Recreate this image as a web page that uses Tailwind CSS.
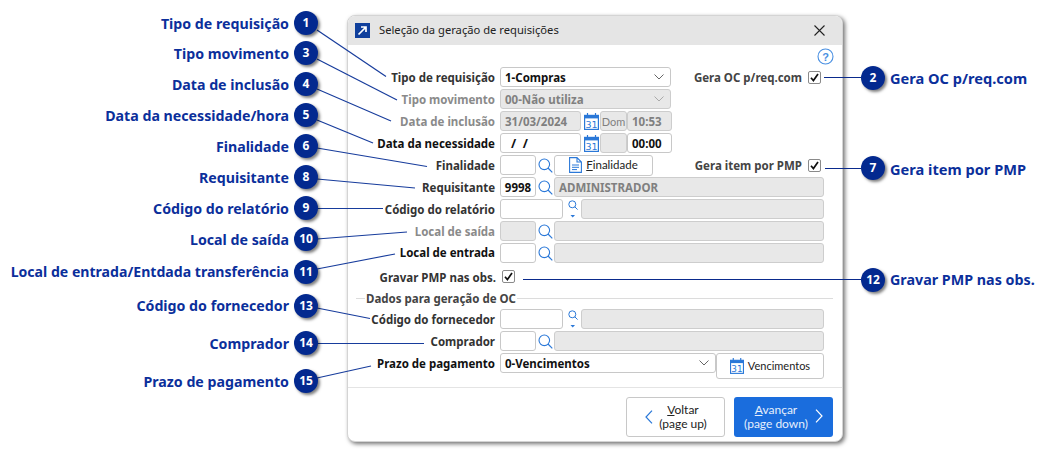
<!DOCTYPE html>
<html lang="pt">
<head>
<meta charset="utf-8">
<script src="https://cdn.jsdelivr.net/npm/@tailwindcss/browser@4"></script>
</head>
<body class="bg-white overflow-hidden">
<div class="relative w-[1052px] h-[451px] bg-white font-['Noto_Sans',sans-serif] pt-[15px] pl-[347px]">

  <!-- Dialog -->
  <div class="w-[496px] h-[427px] bg-white rounded-[8px] border border-[#d4d4d4] shadow-[2px_2px_4px_rgba(0,0,0,0.55)] flex flex-col overflow-hidden">
    <div class="h-[29px] shrink-0 bg-[#e5e5e5] flex items-center pl-[7px] pr-[17px]">
      <svg class="w-[15px] h-[15px] shrink-0" viewBox="0 0 15 15"><rect width="15" height="15" fill="#0f3f9c"/><path d="M3.5 11.5 L10.5 4.5 M6 4 H11 V9" stroke="#fff" stroke-width="1.7" fill="none"/></svg>
      <span class="ml-[9px] text-[11.2px] text-[#222]">Seleção da geração de requisições</span>
      <svg class="ml-auto w-[11px] h-[11px]" viewBox="0 0 11 11"><path d="M.5 .5 L10.5 10.5 M10.5 .5 L.5 10.5" stroke="#222" stroke-width="1.1"/></svg>
    </div>

    <div class="relative flex-1 pt-[22px] flex flex-col gap-[2px] text-[11.5px] font-bold">
      <svg class="absolute left-[469px] top-[3px] w-[17px] h-[17px]" viewBox="0 0 17 17"><circle cx="8.5" cy="8.5" r="7.5" fill="none" stroke="#4a90e2" stroke-width="1.1"/><text x="8.5" y="12.5" text-anchor="middle" font-size="11" font-weight="700" fill="#4a90e2" font-family="Liberation Sans">?</text></svg>

      <!-- Tipo de requisição -->
      <div class="flex items-center h-[20px]">
        <div class="w-[147px] pt-[2px] text-right text-[#333]">Tipo de requisição</div>
        <div class="ml-[5px] w-[171px] h-[20px] bg-white border border-[#c8c8c8] rounded-[3px] flex items-center pl-[4px] pr-[6px] text-[#111]"><span class="pt-[2px]">1-Compras</span>
          <svg class="ml-auto w-[10px] h-[6px]" viewBox="0 0 10 6"><path d="M.5 .5 L5 5 L9.5 .5" fill="none" stroke="#666" stroke-width="1"/></svg></div>
        <div class="ml-auto flex items-center">
          <span class="pt-[2px] text-[#444]">Gera OC p/req.com</span>
          <div class="ml-[6px] w-[13px] h-[13px] border border-[#8a8a8a] rounded-[2px] mr-[21px] flex items-center justify-center"><svg class="w-[9px] h-[9px]" viewBox="0 0 9 9"><path d="M1 4.8 L3.4 7.6 L8 1" fill="none" stroke="#111" stroke-width="1.7"/></svg></div>
        </div>
      </div>

      <!-- Tipo movimento -->
      <div class="flex items-center h-[20px]">
        <div class="w-[147px] pt-[2px] text-right text-[#8a8a8a]">Tipo movimento</div>
        <div class="ml-[5px] w-[171px] h-[20px] bg-[#e8e8e8] border border-[#cdcdcd] rounded-[3px] flex items-center pl-[4px] pr-[6px] text-[#808080]"><span class="pt-[2px]">00-Não utiliza</span>
          <svg class="ml-auto w-[10px] h-[6px]" viewBox="0 0 10 6"><path d="M.5 .5 L5 5 L9.5 .5" fill="none" stroke="#aaa" stroke-width="1"/></svg></div>
      </div>

      <!-- Data de inclusão -->
      <div class="flex items-center h-[20px]">
        <div class="w-[147px] pt-[2px] text-right text-[#8a8a8a]">Data de inclusão</div>
        <div class="ml-[5px] w-[81px] h-[20px] bg-[#e8e8e8] border border-[#cdcdcd] rounded-[3px] flex items-center pl-[4px] pt-[2px] text-[#808080]">31/03/2024</div>
        <svg class="ml-[3px] w-[15px] h-[17px] shrink-0" viewBox="0 0 15 17"><path d="M3.5 0v3M11.5 0v3" stroke="#2a78d8" stroke-width="1.2"/><rect x=".6" y="2.4" width="13.8" height="14" fill="none" stroke="#2a78d8" stroke-width="1.2"/><rect x=".6" y="2.4" width="13.8" height="3" fill="#2a78d8"/><text x="7.5" y="15" text-anchor="middle" font-size="9.5" font-weight="400" fill="#2a78d8" font-family="DejaVu Sans">31</text></svg>
        <div class="ml-[1px] w-[27px] h-[20px] bg-[#e8e8e8] border border-[#cdcdcd] rounded-[3px] flex items-center justify-center pt-[2px] text-[#808080] font-normal font-['Lato',sans-serif] text-[11px]">Dom</div>
        <div class="w-[45px] h-[20px] bg-[#e8e8e8] border border-[#cdcdcd] rounded-[3px] flex items-center pl-[4px] pt-[2px] text-[#808080]">10:53</div>
      </div>

      <!-- Data da necessidade -->
      <div class="flex items-center h-[20px]">
        <div class="w-[147px] pt-[2px] text-right text-[#111]">Data da necessidade</div>
        <div class="ml-[5px] w-[81px] h-[20px] bg-white border border-[#c8c8c8] rounded-[3px] flex items-center pl-[10px] pt-[2px] text-[#111] text-[12.5px] whitespace-pre">/  /</div>
        <svg class="ml-[3px] w-[15px] h-[17px] shrink-0" viewBox="0 0 15 17"><path d="M3.5 0v3M11.5 0v3" stroke="#2a78d8" stroke-width="1.2"/><rect x=".6" y="2.4" width="13.8" height="14" fill="none" stroke="#2a78d8" stroke-width="1.2"/><rect x=".6" y="2.4" width="13.8" height="3" fill="#2a78d8"/><text x="7.5" y="15" text-anchor="middle" font-size="9.5" font-weight="400" fill="#2a78d8" font-family="DejaVu Sans">31</text></svg>
        <div class="ml-[1px] w-[27px] h-[20px] bg-[#e8e8e8] border border-[#cdcdcd] rounded-[3px]"></div>
        <div class="w-[45px] h-[20px] bg-white border border-[#c8c8c8] rounded-[3px] flex items-center pl-[4px] pt-[2px] text-[#111]">00:00</div>
      </div>

      <!-- Finalidade -->
      <div class="flex items-center h-[20px]">
        <div class="w-[147px] pt-[2px] text-right text-[#333]">Finalidade</div>
        <div class="ml-[5px] w-[36px] h-[20px] bg-white border border-[#c8c8c8] rounded-[3px]"></div>
        <svg class="ml-[2px] w-[15px] h-[15px] shrink-0" viewBox="0 0 15 15"><circle cx="6.3" cy="6.3" r="5.3" fill="none" stroke="#2a78d8" stroke-width="1.1"/><path d="M10 10 L14.3 14.3" stroke="#2a78d8" stroke-width="1.2"/></svg>
        <div class="ml-[1px] w-[99px] h-[21px] bg-white border border-[#c8c8c8] rounded-[3px] flex items-center justify-center gap-[4px] font-normal text-[#222] font-['Lato',sans-serif] text-[11.5px]">
          <svg class="w-[13px] h-[16px]" viewBox="0 0 13 16"><path d="M.6.6H8L12.4 5V15.4H.6ZM8 .6V5H12.4" fill="none" stroke="#2a78d8" stroke-width="1.1"/><path d="M3 8H10M3 10.3H10M3 12.6H8" stroke="#2a78d8" stroke-width="1"/></svg>
          <span><span class="underline">F</span>inalidade</span></div>
        <div class="ml-auto flex items-center">
          <span class="pt-[2px] text-[#444]">Gera item por PMP</span>
          <div class="ml-[6px] w-[13px] h-[13px] border border-[#8a8a8a] rounded-[2px] mr-[21px] flex items-center justify-center"><svg class="w-[9px] h-[9px]" viewBox="0 0 9 9"><path d="M1 4.8 L3.4 7.6 L8 1" fill="none" stroke="#111" stroke-width="1.7"/></svg></div>
        </div>
      </div>

      <!-- Requisitante -->
      <div class="flex items-center h-[20px]">
        <div class="w-[147px] pt-[2px] text-right text-[#333]">Requisitante</div>
        <div class="ml-[5px] w-[36px] h-[20px] bg-white border border-[#c8c8c8] rounded-[3px] flex items-center justify-center pt-[2px] text-[#111]">9998</div>
        <svg class="ml-[2px] w-[15px] h-[15px] shrink-0" viewBox="0 0 15 15"><circle cx="6.3" cy="6.3" r="5.3" fill="none" stroke="#2a78d8" stroke-width="1.1"/><path d="M10 10 L14.3 14.3" stroke="#2a78d8" stroke-width="1.2"/></svg>
        <div class="ml-[1px] w-[270px] h-[20px] bg-[#e8e8e8] border border-[#cdcdcd] rounded-[3px] flex items-center pl-[4px] pt-[2px] text-[#808080]">ADMINISTRADOR</div>
      </div>

      <!-- Código do relatório -->
      <div class="flex items-center h-[20px]">
        <div class="w-[147px] pt-[2px] text-right text-[#333]">Código do relatório</div>
        <div class="ml-[5px] w-[63px] h-[20px] bg-white border border-[#c8c8c8] rounded-[3px]"></div>
        <svg class="ml-[5px] w-[10px] h-[18px] shrink-0" viewBox="0 0 10 18"><circle cx="4.3" cy="4.3" r="3.5" fill="none" stroke="#2a78d8" stroke-width="1"/><path d="M6.8 6.8 L9.6 9.6" stroke="#2a78d8" stroke-width="1"/><path d="M2.5 15 H7 L4.75 17.4Z" fill="#2a78d8"/></svg>
        <div class="ml-[3px] w-[243px] h-[20px] bg-[#e8e8e8] border border-[#cdcdcd] rounded-[3px]"></div>
      </div>

      <!-- Local de saída -->
      <div class="flex items-center h-[20px]">
        <div class="w-[147px] pt-[2px] text-right text-[#8a8a8a]">Local de saída</div>
        <div class="ml-[5px] w-[36px] h-[20px] bg-[#e8e8e8] border border-[#cdcdcd] rounded-[3px]"></div>
        <svg class="ml-[2px] w-[15px] h-[15px] shrink-0" viewBox="0 0 15 15"><circle cx="6.3" cy="6.3" r="5.3" fill="none" stroke="#2a78d8" stroke-width="1.1"/><path d="M10 10 L14.3 14.3" stroke="#2a78d8" stroke-width="1.2"/></svg>
        <div class="ml-[1px] w-[270px] h-[20px] bg-[#e8e8e8] border border-[#cdcdcd] rounded-[3px]"></div>
      </div>

      <!-- Local de entrada -->
      <div class="flex items-center h-[20px]">
        <div class="w-[147px] text-right text-[#111]">Local de entrada</div>
        <div class="ml-[5px] w-[36px] h-[20px] bg-white border border-[#c8c8c8] rounded-[3px]"></div>
        <svg class="ml-[2px] w-[15px] h-[15px] shrink-0" viewBox="0 0 15 15"><circle cx="6.3" cy="6.3" r="5.3" fill="none" stroke="#2a78d8" stroke-width="1.1"/><path d="M10 10 L14.3 14.3" stroke="#2a78d8" stroke-width="1.2"/></svg>
        <div class="ml-[1px] w-[270px] h-[20px] bg-[#e8e8e8] border border-[#cdcdcd] rounded-[3px]"></div>
      </div>

      <!-- Gravar PMP -->
      <div class="flex items-center h-[13px] mt-[5px]">
        <div class="w-[148px] pt-[2px] text-right text-[#333]">Gravar PMP nas obs.</div>
        <div class="ml-[6px] w-[13px] h-[13px] border border-[#8a8a8a] rounded-[2px] flex items-center justify-center"><svg class="w-[9px] h-[9px]" viewBox="0 0 9 9"><path d="M1 4.8 L3.4 7.6 L8 1" fill="none" stroke="#111" stroke-width="1.7"/></svg></div>
      </div>

      <!-- Dados -->
      <div class="flex items-center h-[14px] mt-[6px] pl-[8px] pr-[9px]">
        <div class="w-[9px] h-px bg-[#dcdcdc]"></div>
        <span class="px-[1px] pt-[2px] text-[#444]">Dados para geração de OC</span>
        <div class="flex-1 h-px bg-[#dcdcdc]"></div>
      </div>

      <!-- Código do fornecedor -->
      <div class="flex items-center h-[20px] mt-[2px]">
        <div class="w-[147px] pt-[2px] text-right text-[#333]">Código do fornecedor</div>
        <div class="ml-[5px] w-[63px] h-[20px] bg-white border border-[#c8c8c8] rounded-[3px]"></div>
        <svg class="ml-[5px] w-[10px] h-[18px] shrink-0" viewBox="0 0 10 18"><circle cx="4.3" cy="4.3" r="3.5" fill="none" stroke="#2a78d8" stroke-width="1"/><path d="M6.8 6.8 L9.6 9.6" stroke="#2a78d8" stroke-width="1"/><path d="M2.5 15 H7 L4.75 17.4Z" fill="#2a78d8"/></svg>
        <div class="ml-[3px] w-[243px] h-[20px] bg-[#e8e8e8] border border-[#cdcdcd] rounded-[3px]"></div>
      </div>

      <!-- Comprador -->
      <div class="flex items-center h-[20px]">
        <div class="w-[147px] pt-[2px] text-right text-[#333]">Comprador</div>
        <div class="ml-[5px] w-[36px] h-[20px] bg-white border border-[#c8c8c8] rounded-[3px]"></div>
        <svg class="ml-[2px] w-[15px] h-[15px] shrink-0" viewBox="0 0 15 15"><circle cx="6.3" cy="6.3" r="5.3" fill="none" stroke="#2a78d8" stroke-width="1.1"/><path d="M10 10 L14.3 14.3" stroke="#2a78d8" stroke-width="1.2"/></svg>
        <div class="ml-[1px] w-[270px] h-[20px] bg-[#e8e8e8] border border-[#cdcdcd] rounded-[3px]"></div>
      </div>

      <!-- Prazo de pagamento -->
      <div class="flex items-start h-[26px]">
        <div class="w-[147px] h-[20px] pt-[2px] flex items-center justify-end text-[#111]">Prazo de pagamento</div>
        <div class="ml-[5px] w-[216px] h-[20px] bg-white border border-[#c8c8c8] rounded-[3px] flex items-center pl-[4px] pr-[6px] text-[#111]"><span class="pt-[2px]">0-Vencimentos</span>
          <svg class="ml-auto w-[10px] h-[6px]" viewBox="0 0 10 6"><path d="M.5 .5 L5 5 L9.5 .5" fill="none" stroke="#666" stroke-width="1"/></svg></div>
        <div class="w-[108px] h-[26px] bg-white border border-[#c8c8c8] rounded-[3px] flex items-center justify-center gap-[4px] font-normal text-[#222] font-['Lato',sans-serif] text-[11px]">
          <svg class="w-[14px] h-[16px]" viewBox="0 0 15 17"><path d="M3.5 0v3M11.5 0v3" stroke="#2a78d8" stroke-width="1.2"/><rect x=".6" y="2.4" width="13.8" height="14" fill="none" stroke="#2a78d8" stroke-width="1.2"/><rect x=".6" y="2.4" width="13.8" height="3" fill="#2a78d8"/><text x="7.5" y="15" text-anchor="middle" font-size="9.5" fill="#2a78d8" font-family="DejaVu Sans">31</text></svg>
          <span>Vencimentos</span></div>
      </div>

      <!-- Footer -->
      <div class="mt-[6px] border-t border-[#e4e4e4] pt-[9px] flex justify-end gap-[9px] pr-[9px] font-normal font-['Lato',sans-serif] text-[12px] leading-[14px]">
        <div class="relative w-[99px] h-[40px] bg-white border border-[#c8c8c8] rounded-[3px] flex flex-col items-center justify-center pl-[15px] text-[#222]">
          <svg class="absolute left-[18px] top-[12px] w-[8px] h-[14px]" viewBox="0 0 8 14"><path d="M7 .7 L1 7 L7 13.3" fill="none" stroke="#2a78d8" stroke-width="1.2"/></svg>
          <span><span class="underline">V</span>oltar</span><span>(page up)</span>
        </div>
        <div class="relative w-[99px] h-[40px] bg-[#1a6ddd] rounded-[3px] flex flex-col items-center justify-center pr-[15px] text-[#e6effc]">
          <svg class="absolute right-[10px] top-[12px] w-[8px] h-[14px]" viewBox="0 0 8 14"><path d="M1 .7 L7 7 L1 13.3" fill="none" stroke="#fff" stroke-width="1.2"/></svg>
          <span><span class="underline">A</span>vançar</span><span>(page down)</span>
        </div>
      </div>
    </div>
  </div>

  <!-- Leader lines -->
  <svg class="absolute left-0 top-0 w-[1052px] h-[451px] pointer-events-none" viewBox="0 0 1052 451" fill="none" stroke="#173c9c" stroke-width="1.2">
    <path d="M317 30 L386 76.5"/><path d="M317 59 L397 100"/><path d="M317 89 L391 121"/><path d="M317 120 L373 143"/>
    <path d="M317 148 L427 166.5"/><path d="M317 179 L415 188"/><path d="M317 208.5 H383"/><path d="M317 239 L407 232"/>
    <path d="M317 269 L395 254"/><path d="M317 308 L370 318.5"/><path d="M317 343.5 H424"/><path d="M317 378 L371 366"/>
    <path d="M824 77.5 H861" stroke="#0a2a8c"/><path d="M825 168.5 H861" stroke="#0a2a8c"/><path d="M523 279.5 H861" stroke="#0a2a8c"/>
  </svg>

  <!-- Left callouts -->
  <div class="absolute right-[763px] top-[13px] h-[22px] leading-[22px] text-[14.2px] font-bold text-[#0b2f9b] whitespace-nowrap">Tipo de requisição</div>
  <div class="absolute right-[763px] top-[43px] h-[22px] leading-[22px] text-[14.2px] font-bold text-[#0b2f9b] whitespace-nowrap">Tipo movimento</div>
  <div class="absolute right-[763px] top-[74px] h-[22px] leading-[22px] text-[14.2px] font-bold text-[#0b2f9b] whitespace-nowrap">Data de inclusão</div>
  <div class="absolute right-[763px] top-[105px] h-[22px] leading-[22px] text-[14.2px] font-bold text-[#0b2f9b] whitespace-nowrap">Data da necessidade/hora</div>
  <div class="absolute right-[763px] top-[136px] h-[22px] leading-[22px] text-[14.2px] font-bold text-[#0b2f9b] whitespace-nowrap">Finalidade</div>
  <div class="absolute right-[763px] top-[167px] h-[22px] leading-[22px] text-[14.2px] font-bold text-[#0b2f9b] whitespace-nowrap">Requisitante</div>
  <div class="absolute right-[763px] top-[198px] h-[22px] leading-[22px] text-[14.2px] font-bold text-[#0b2f9b] whitespace-nowrap">Código do relatório</div>
  <div class="absolute right-[763px] top-[229px] h-[22px] leading-[22px] text-[14.2px] font-bold text-[#0b2f9b] whitespace-nowrap">Local de saída</div>
  <div class="absolute right-[763px] top-[261px] h-[22px] leading-[22px] text-[14.1px] font-bold text-[#0b2f9b] whitespace-nowrap">Local de entrada/Entdada transferência</div>
  <div class="absolute right-[763px] top-[295px] h-[22px] leading-[22px] text-[14.2px] font-bold text-[#0b2f9b] whitespace-nowrap">Código do fornecedor</div>
  <div class="absolute right-[763px] top-[333px] h-[22px] leading-[22px] text-[14.2px] font-bold text-[#0b2f9b] whitespace-nowrap">Comprador</div>
  <div class="absolute right-[763px] top-[371px] h-[22px] leading-[22px] text-[14.2px] font-bold text-[#0b2f9b] whitespace-nowrap">Prazo de pagamento</div>

  <!-- Right callouts -->
  <div class="absolute left-[890px] top-[67px] h-[22px] leading-[22px] text-[14.6px] font-bold text-[#0b2f9b] whitespace-nowrap">Gera OC p/req.com</div>
  <div class="absolute left-[890px] top-[158px] h-[22px] leading-[22px] text-[14.6px] font-bold text-[#0b2f9b] whitespace-nowrap">Gera item por PMP</div>
  <div class="absolute left-[890px] top-[269px] h-[22px] leading-[22px] text-[14.3px] font-bold text-[#0b2f9b] whitespace-nowrap">Gravar PMP nas obs.</div>

  <!-- Badges -->
  <div class="absolute left-[294px] top-[11px] w-[24px] h-[24px] rounded-full bg-[#03298f] shadow-[2px_2px_3px_rgba(0,0,0,0.5)] flex items-center justify-center text-white text-[12px] font-bold">1</div>
  <div class="absolute left-[294px] top-[41px] w-[24px] h-[24px] rounded-full bg-[#03298f] shadow-[2px_2px_3px_rgba(0,0,0,0.5)] flex items-center justify-center text-white text-[12px] font-bold">3</div>
  <div class="absolute left-[294px] top-[72px] w-[24px] h-[24px] rounded-full bg-[#03298f] shadow-[2px_2px_3px_rgba(0,0,0,0.5)] flex items-center justify-center text-white text-[12px] font-bold">4</div>
  <div class="absolute left-[294px] top-[103px] w-[24px] h-[24px] rounded-full bg-[#03298f] shadow-[2px_2px_3px_rgba(0,0,0,0.5)] flex items-center justify-center text-white text-[12px] font-bold">5</div>
  <div class="absolute left-[294px] top-[134px] w-[24px] h-[24px] rounded-full bg-[#03298f] shadow-[2px_2px_3px_rgba(0,0,0,0.5)] flex items-center justify-center text-white text-[12px] font-bold">6</div>
  <div class="absolute left-[294px] top-[165px] w-[24px] h-[24px] rounded-full bg-[#03298f] shadow-[2px_2px_3px_rgba(0,0,0,0.5)] flex items-center justify-center text-white text-[12px] font-bold">8</div>
  <div class="absolute left-[294px] top-[196px] w-[24px] h-[24px] rounded-full bg-[#03298f] shadow-[2px_2px_3px_rgba(0,0,0,0.5)] flex items-center justify-center text-white text-[12px] font-bold">9</div>
  <div class="absolute left-[294px] top-[227px] w-[24px] h-[24px] rounded-full bg-[#03298f] shadow-[2px_2px_3px_rgba(0,0,0,0.5)] flex items-center justify-center text-white text-[12px] font-bold">10</div>
  <div class="absolute left-[294px] top-[260px] w-[24px] h-[24px] rounded-full bg-[#03298f] shadow-[2px_2px_3px_rgba(0,0,0,0.5)] flex items-center justify-center text-white text-[12px] font-bold">11</div>
  <div class="absolute left-[294px] top-[294px] w-[24px] h-[24px] rounded-full bg-[#03298f] shadow-[2px_2px_3px_rgba(0,0,0,0.5)] flex items-center justify-center text-white text-[12px] font-bold">13</div>
  <div class="absolute left-[294px] top-[331px] w-[24px] h-[24px] rounded-full bg-[#03298f] shadow-[2px_2px_3px_rgba(0,0,0,0.5)] flex items-center justify-center text-white text-[12px] font-bold">14</div>
  <div class="absolute left-[294px] top-[369px] w-[24px] h-[24px] rounded-full bg-[#03298f] shadow-[2px_2px_3px_rgba(0,0,0,0.5)] flex items-center justify-center text-white text-[12px] font-bold">15</div>
  <div class="absolute left-[861px] top-[66px] w-[24px] h-[24px] rounded-full bg-[#03298f] shadow-[2px_2px_3px_rgba(0,0,0,0.5)] flex items-center justify-center text-white text-[12px] font-bold">2</div>
  <div class="absolute left-[861px] top-[156px] w-[24px] h-[24px] rounded-full bg-[#03298f] shadow-[2px_2px_3px_rgba(0,0,0,0.5)] flex items-center justify-center text-white text-[12px] font-bold">7</div>
  <div class="absolute left-[861px] top-[268px] w-[24px] h-[24px] rounded-full bg-[#03298f] shadow-[2px_2px_3px_rgba(0,0,0,0.5)] flex items-center justify-center text-white text-[12px] font-bold">12</div>
</div>
</body>
</html>
